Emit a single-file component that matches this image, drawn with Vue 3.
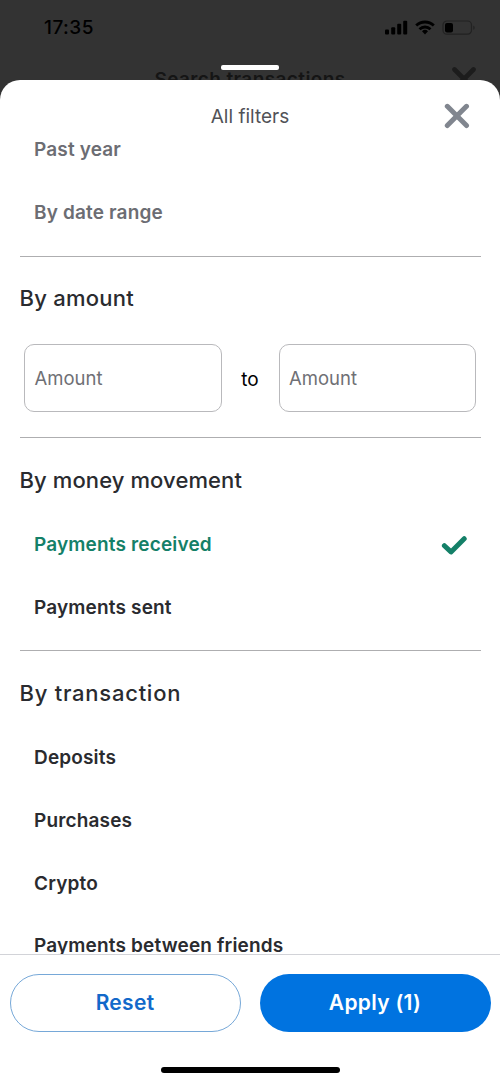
<script setup>
const dateOptions = ['Past year', 'By date range']
const movements = [
  { label: 'Payments received', selected: true },
  { label: 'Payments sent', selected: false },
]
const transactions = ['Deposits', 'Purchases', 'Crypto', 'Payments between friends']
</script>

<template>
  <div class="screen">
    <div class="backdrop">
      <div class="status">
        <span class="time">17:35</span>
        <svg class="indicators" width="92" height="18" viewBox="0 0 92 18">
          <rect x="1" y="10.5" width="4" height="5" rx="1" />
          <rect x="7.2" y="8.3" width="4" height="7.2" rx="1" />
          <rect x="13.2" y="4.8" width="4" height="10.7" rx="1" />
          <rect x="19.2" y="1.8" width="4" height="13.7" rx="1" />
          <g fill="none" stroke="#000" stroke-width="2.8">
            <path d="M32.2 6.6a12.6 12.6 0 0 1 17.6 0" />
            <path d="M35.5 10.2a8 8 0 0 1 11 0" />
          </g>
          <path d="M41 15.4l-3-3.1a4.3 4.3 0 0 1 6 0z" />
          <rect x="59" y="2" width="28.5" height="13.2" rx="4" fill="none" stroke="#222" stroke-width="1.2" />
          <rect x="61" y="4" width="8" height="9.4" rx="2" />
          <path d="M89.3 6.5a2.5 2.5 0 0 1 0 4.5z" fill="#222" />
        </svg>
      </div>
      <div class="handle"></div>
      <div class="behind">Search transactions</div>
      <svg class="behind-close" width="24" height="24" viewBox="0 0 24 24"><path d="M2.5 2.5l19 19m0-19l-19 19" /></svg>
    </div>

    <section class="sheet">
      <header class="header">
        <span class="title">All filters</span>
        <svg class="close" width="26" height="26" viewBox="0 0 26 26"><path d="M3.3 3.3l19.2 19.2M22.5 3.3L3.3 22.5" /></svg>
      </header>

      <main class="content">
        <div class="group first">
          <div v-for="o in dateOptions" :key="o" class="row muted"><span>{{ o }}</span></div>
        </div>
        <div class="group">
          <h2 class="amount-title">By amount</h2>
          <div class="amounts">
            <div class="field">Amount</div>
            <span class="to">to</span>
            <div class="field">Amount</div>
          </div>
        </div>
        <div class="group movement">
          <h2>By money movement</h2>
          <div v-for="m in movements" :key="m.label" class="row" :class="{ selected: m.selected }">
            <span>{{ m.label }}</span>
            <svg v-if="m.selected" class="check" width="28" height="22" viewBox="0 0 28 22"><path d="M3.4 11.7l6.6 6.2L23.2 4.7" /></svg>
          </div>
        </div>
        <div class="group">
          <h2 class="transaction-title">By transaction</h2>
          <div v-for="t in transactions" :key="t" class="row"><span>{{ t }}</span></div>
        </div>
      </main>

      <footer class="footer">
        <div class="buttons">
          <button class="reset">Reset</button>
          <button class="apply">Apply (1)</button>
        </div>
        <div class="home"></div>
      </footer>
    </section>
  </div>
</template>

<style>
body { margin: 0; background: #333; }
</style>

<style scoped>
* { box-sizing: border-box; }
.screen {
  width: 500px;
  height: 1082px;
  display: flex;
  flex-direction: column;
  overflow: hidden;
  background: #333;
  font-family: Inter, "Liberation Sans", sans-serif;
  color: #2a2b2f;
}
.backdrop { position: relative; flex: 0 0 79.5px; }
.status { display: flex; justify-content: space-between; align-items: center; height: 55px; padding: 0 24px 0 44px; color: #000; }
.time { font-size: 19px; font-weight: 500; line-height: 24px; letter-spacing: 0.5px; }
.indicators { display: block; fill: #000; }
.handle { position: absolute; left: 221px; top: 65px; width: 58px; height: 5px; border-radius: 2px; background: #fff; z-index: 1; }
.behind { position: absolute; left: 0; width: 500px; top: 68px; text-align: center; font-size: 19px; line-height: 24px; font-weight: 600; letter-spacing: 0.4px; color: #151515; }
.behind-close { position: absolute; left: 452px; top: 67px; fill: none; stroke: #1c1c1c; stroke-width: 4.6; stroke-linecap: round; }
.sheet { position: relative; flex: 1; min-height: 0; display: flex; flex-direction: column; background: #fff; border-radius: 20px 20px 0 0; overflow: hidden; }
.header { flex: 0 0 50.5px; display: flex; justify-content: center; padding-top: 24px; }
.title { font-size: 19px; line-height: 25px; color: #515257; }
.close { position: absolute; right: 30px; top: 23.5px; fill: none; stroke: #81868f; stroke-width: 5; stroke-linecap: round; }
.content { flex: 1; min-height: 0; overflow: hidden; }
.group { padding: 0 19.5px; }
.group + .group::before { content: ""; display: block; height: 1px; background: #aeaeb0; }
.first { margin-top: -11.5px; padding-bottom: 12px; }
.movement { padding-bottom: 11px; }
h2 { margin: 0; height: 75.5px; padding-top: 27px; font-size: 22px; line-height: 30px; font-weight: 500; letter-spacing: 0.1px; white-space: nowrap; }
.amount-title { height: 87px; padding-top: 26px; letter-spacing: 0.25px; }
.transaction-title { letter-spacing: 0.75px; }
.row { height: 62.8px; padding: 0 12px 0 14.5px; display: flex; align-items: center; justify-content: space-between; font-size: 19px; line-height: 24px; font-weight: 600; letter-spacing: 0.16px; }
.muted { color: #6c6d73; }
.selected { color: #148068; }
.check { fill: none; stroke: #148068; stroke-width: 5; stroke-linecap: round; stroke-linejoin: round; }
.amounts { display: flex; align-items: center; padding: 0 4.5px 25px; }
.field { flex: 1; height: 68px; border: 1px solid #b9b9bc; border-radius: 10px; display: flex; align-items: center; padding: 0 0 0 9.5px; font-size: 18.5px; color: #6f7075; }
.to { width: 57px; padding-top: 2px; text-align: center; font-size: 19px; color: #000; }
.footer { flex: 0 0 128px; border-top: 1px solid #d2d3d8; }
.buttons { display: grid; grid-template-columns: 1fr 1fr; gap: 19px; padding: 19px 9.5px 0; }
button { height: 58px; padding: 0 0 2px; border-radius: 29px; font: 600 21px Inter, sans-serif; letter-spacing: 0.3px; }
.reset { background: #fff; border: 1px solid #76a8d8; color: #1269ca; }
.apply { background: #0073e0; border: 0; color: #fff; }
.home { width: 179px; height: 6px; margin: 35px auto 0; border-radius: 3px; background: #000; }
</style>
